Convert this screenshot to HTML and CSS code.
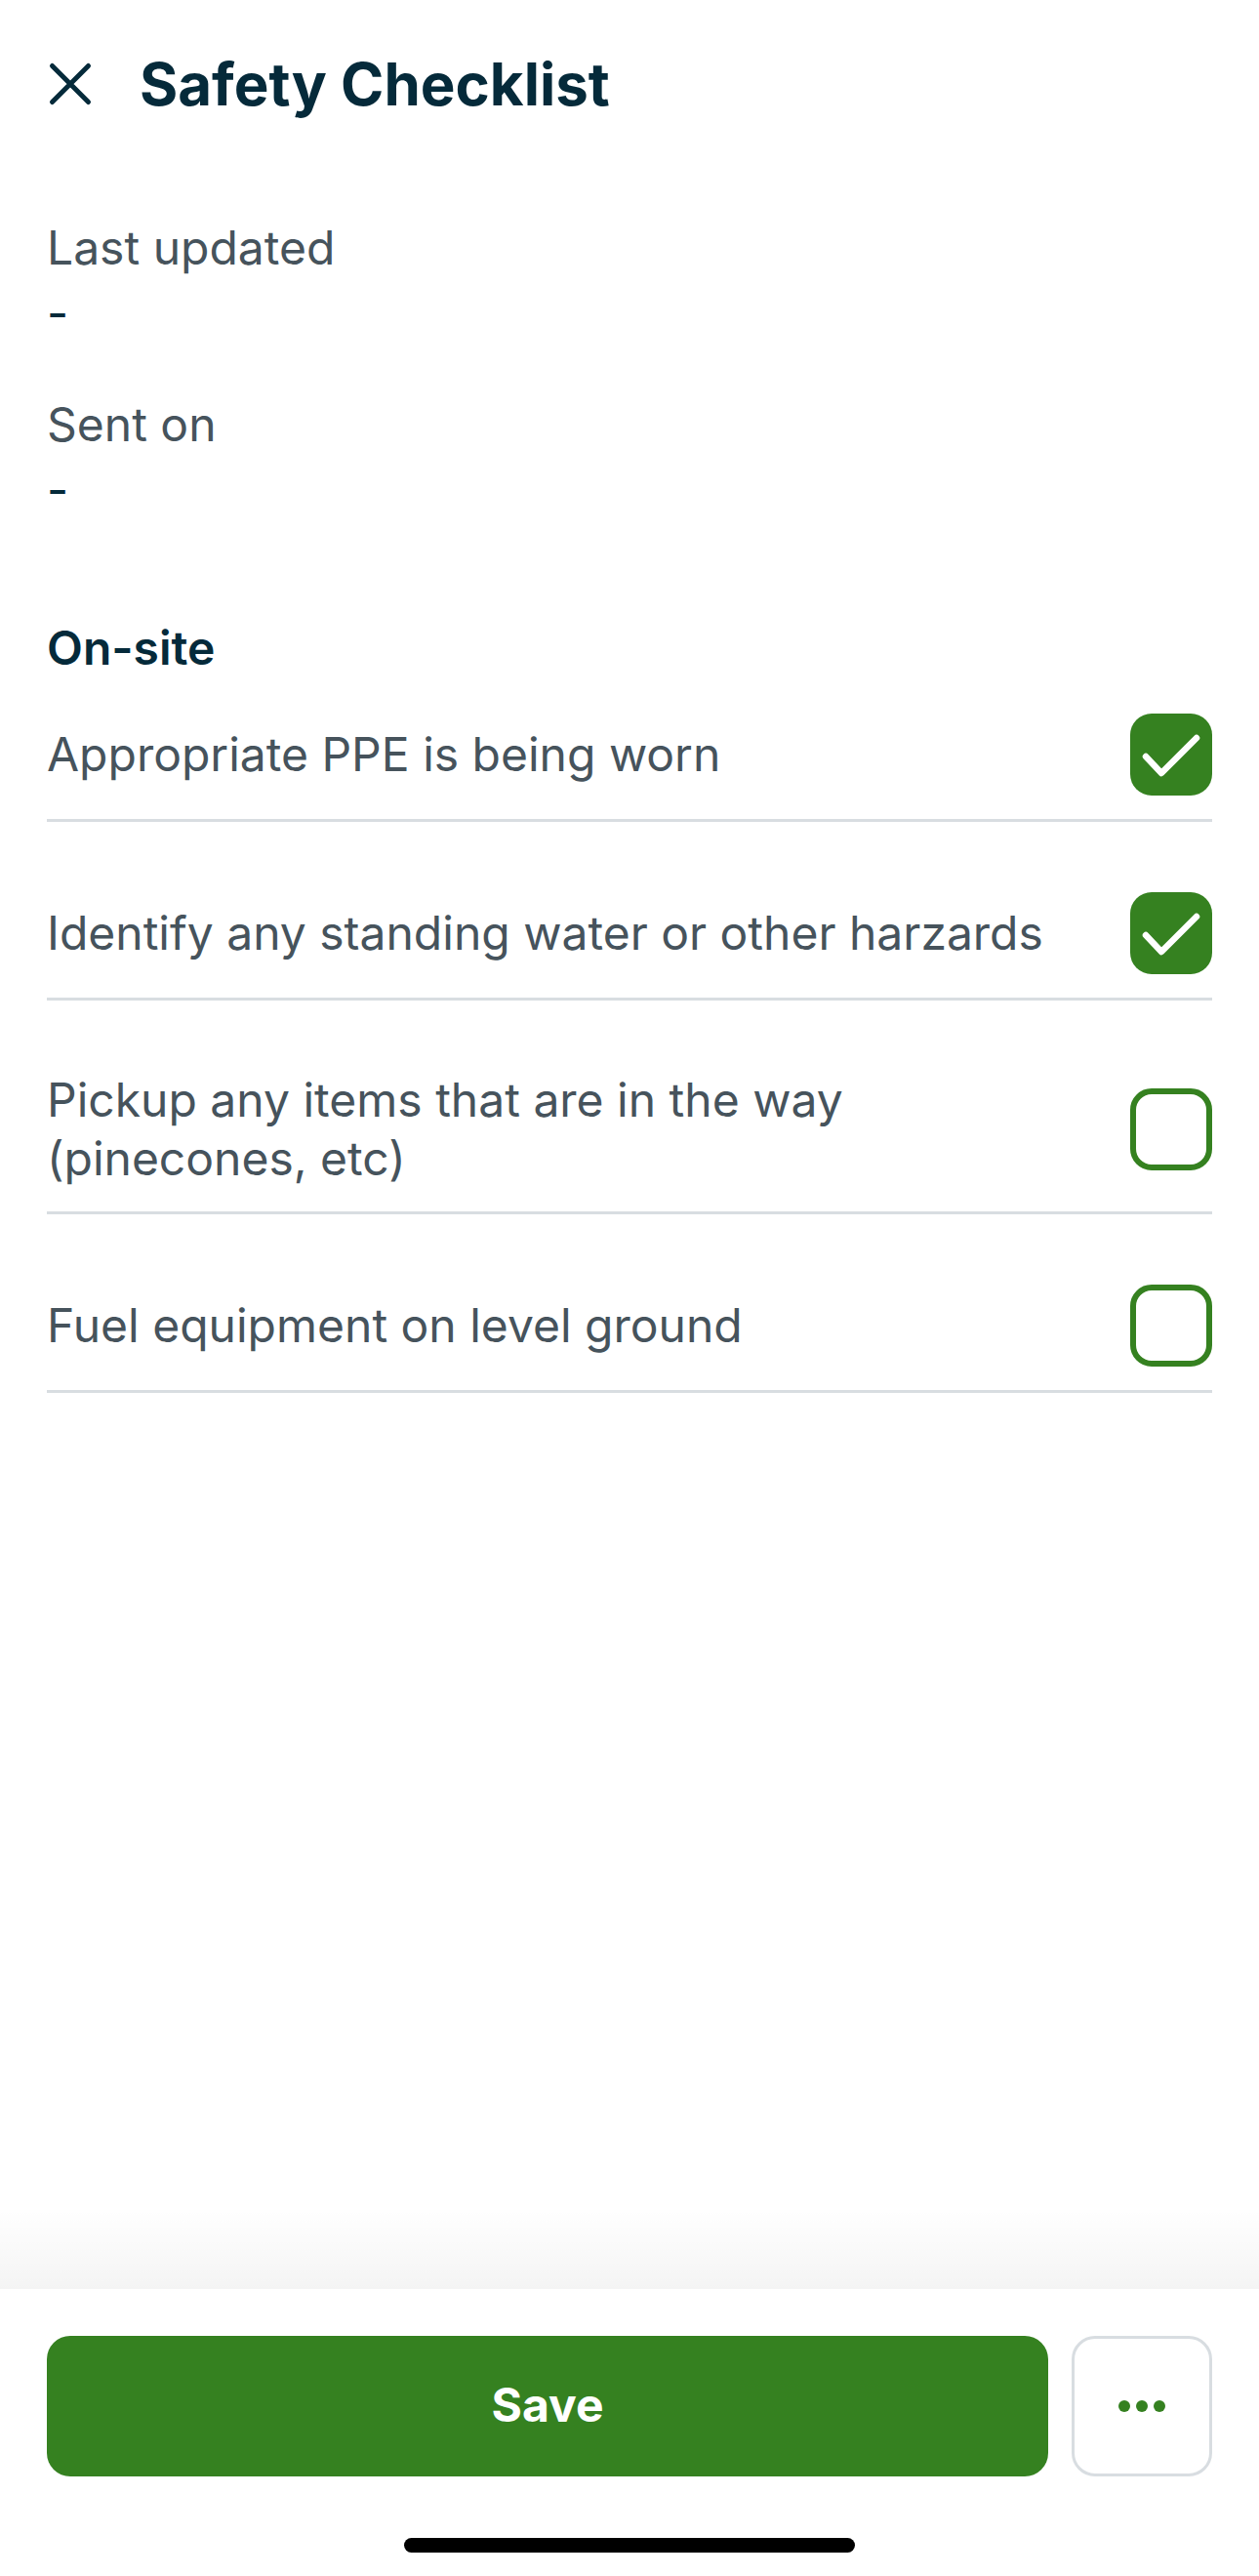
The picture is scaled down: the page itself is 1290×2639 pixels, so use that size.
FILE: index.html
```html
<!DOCTYPE html>
<html lang="en">
<head>
<meta charset="utf-8">
<title>Safety Checklist</title>
<link rel="stylesheet" href="styles.css">
</head>
<body>
<div class="screen">
  <main class="content">
    <header class="header">
      <button class="close" aria-label="Close">
        <svg width="48" height="48" viewBox="0 0 48 48"><path d="M5.5 5.5 L42.5 42.5 M42.5 5.5 L5.5 42.5" stroke="#052a3a" stroke-width="5" stroke-linecap="round" fill="none"/></svg>
      </button>
      <h1 class="title">Safety Checklist</h1>
    </header>

    <section class="meta">
      <div class="meta-item">
        <div class="meta-label">Last updated</div>
        <div class="meta-value">-</div>
      </div>
      <div class="meta-item meta-item-second">
        <div class="meta-label">Sent on</div>
        <div class="meta-value">-</div>
      </div>
    </section>

    <section class="group">
      <h2 class="group-title">On-site</h2>
      <div class="row row-first">
        <div class="row-text">Appropriate PPE is being worn</div>
        <div class="box box-checked"><svg width="84" height="84" viewBox="0 0 84 84"><path d="M16 44 L32 61 L68 25" stroke="#fff" stroke-width="6.5" stroke-linecap="round" stroke-linejoin="round" fill="none"/></svg></div>
      </div>
      <div class="row">
        <div class="row-text">Identify any standing water or other harzards</div>
        <div class="box box-checked"><svg width="84" height="84" viewBox="0 0 84 84"><path d="M16 44 L32 61 L68 25" stroke="#fff" stroke-width="6.5" stroke-linecap="round" stroke-linejoin="round" fill="none"/></svg></div>
      </div>
      <div class="row">
        <div class="row-text">Pickup any items that are in the way (pinecones, etc)</div>
        <div class="box"></div>
      </div>
      <div class="row">
        <div class="row-text">Fuel equipment on level ground</div>
        <div class="box"></div>
      </div>
    </section>
  </main>

  <div class="fade"></div>
  <footer class="footer">
    <div class="actions">
      <button class="save">Save</button>
      <button class="more" aria-label="More"><span class="dot"></span><span class="dot"></span><span class="dot"></span></button>
    </div>
    <div class="home-bar"></div>
  </footer>
</div>
</body>
</html>
```
FILE: styles.css
```css
* { box-sizing: border-box; }
html, body { margin: 0; padding: 0; background: #ffffff; }
body {
  font-family: Inter, "Noto Sans", "Liberation Sans", sans-serif;
  -webkit-font-smoothing: antialiased;
}
.screen {
  width: 1290px;
  height: 2639px;
  display: flex;
  flex-direction: column;
  overflow: hidden;
}
.content {
  flex: 1;
  padding: 0 48px;
}
.header {
  display: flex;
  align-items: center;
  height: 72px;
  margin-top: 50px;
}
.close {
  width: 48px;
  height: 48px;
  padding: 0;
  border: 0;
  background: none;
  display: block;
}
.close svg { display: block; }
.title {
  margin: 0 0 0 47px;
  font-size: 60px;
  line-height: 72px;
  font-weight: 700;
  color: #052a3a;
}
.meta { margin-top: 102px; }
.meta-item-second { margin-top: 54px; }
.meta-label {
  font-size: 48px;
  line-height: 60px;
  color: #46535c;
}
.meta-value {
  margin-top: 7px;
  font-size: 48px;
  line-height: 60px;
  color: #052a3a;
}
.group { margin-top: 102px; }
.group-title {
  margin: 0;
  font-size: 48px;
  line-height: 60px;
  font-weight: 600;
  color: #052a3a;
}
.row {
  display: flex;
  align-items: center;
  gap: 48px;
  padding: 24px 0;
  margin-top: 48px;
  border-bottom: 3px solid #d8dde1;
}
.row-first { margin-top: 13px; }
.row-text {
  flex: 1;
  font-size: 48px;
  line-height: 60px;
  color: #46535c;
}
.box {
  flex: none;
  width: 84px;
  height: 84px;
  border: 6px solid #358120;
  border-radius: 22px;
}
.box-checked {
  border: 0;
  background: #358120;
}
.box svg { display: block; }
.fade {
  flex: none;
  height: 82px;
  background: linear-gradient(to bottom, rgba(0,0,0,0), rgba(0,0,0,0.045));
}
.footer {
  flex: none;
  background: #ffffff;
  padding: 48px 48px 24px;
}
.actions {
  display: flex;
  gap: 24px;
}
.save {
  flex: 1;
  height: 144px;
  border: 0;
  border-radius: 24px;
  background: #358120;
  color: #ffffff;
  font-family: Inter, "Noto Sans", "Liberation Sans", sans-serif;
  font-size: 48px;
  font-weight: 700;
  padding: 0 0 4px;
}
.more {
  flex: none;
  width: 144px;
  height: 144px;
  border: 3px solid #d8dde1;
  border-radius: 24px;
  background: #ffffff;
  display: flex;
  align-items: center;
  justify-content: center;
  gap: 6px;
  padding: 0;
}
.dot {
  width: 12px;
  height: 12px;
  border-radius: 50%;
  background: #358120;
}
.home-bar {
  width: 462px;
  height: 15px;
  margin: 63px auto 0;
  border-radius: 8px;
  background: #000000;
}
```
